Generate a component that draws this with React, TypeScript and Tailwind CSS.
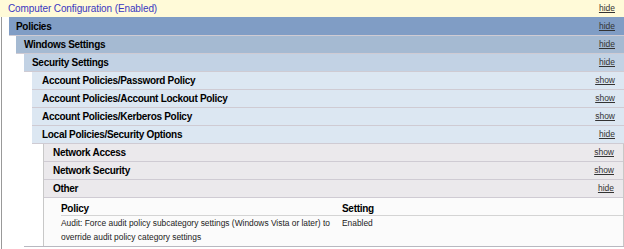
const Link = ({ label }: { label: string }) => (
  <span className="text-[8.5px] text-[#333] underline pr-[9px]">{label}</span>
);

const Row = ({
  title,
  link,
  className,
}: {
  title: string;
  link: string;
  className: string;
}) => (
  <div
    className={`flex items-center justify-between h-[18px] border-b border-[#cfcbd3] ${className}`}
  >
    <span className="text-[10px] font-bold tracking-[-0.3px] text-black">{title}</span>
    <Link label={link} />
  </div>
);

export default function App() {
  return (
    <div
      className="w-[624px] h-[249px] bg-white overflow-hidden"
      style={{ fontFamily: '"Liberation Sans", Arial, sans-serif' }}
    >
      <div className="flex items-center justify-between h-[17px] bg-[#fffad8] pl-[8px]">
        <span className="text-[10px] text-[#3a38c0] tracking-[-0.1px]">
          Computer Configuration (Enabled)
        </span>
        <Link label="hide" />
      </div>

      <div className="ml-[1px] border-l border-[#999] pl-[7px] h-[232px]">
        <Row title="Policies" link="hide" className="bg-[#809dc5] h-[19px] pl-[7px]" />
        <div className="pl-[7px]">
          <Row title="Windows Settings" link="hide" className="bg-[#a5bad2] pl-[8px]" />
          <div className="pl-[8px]">
            <Row title="Security Settings" link="hide" className="bg-[#c2d2e4] pl-[8px]" />
            <div className="pl-[8px] border-b border-[#b8b8c0]">
              <Row
                title="Account Policies/Password Policy"
                link="show"
                className="bg-[#dce7f2] pl-[10px]"
              />
              <Row
                title="Account Policies/Account Lockout Policy"
                link="show"
                className="bg-[#dce7f2] pl-[10px]"
              />
              <Row
                title="Account Policies/Kerberos Policy"
                link="show"
                className="bg-[#dce7f2] pl-[10px]"
              />
              <Row
                title="Local Policies/Security Options"
                link="hide"
                className="bg-[#dce7f2] pl-[10px]"
              />
              <div className="ml-[11px] border-l border-[#c8c8c8] border-r">
                <Row title="Network Access" link="show" className="bg-[#ebe9ec] pl-[9px]" />
                <Row title="Network Security" link="show" className="bg-[#ebe9ec] pl-[9px]" />
                <Row title="Other" link="hide" className="bg-[#ebe9ec] pl-[9px]" />
                <div className="bg-[#fbfbfb] pl-[17px] pt-[4px] h-[48px]">
                  <div className="flex items-center h-[14px] border-b border-[#d4d4d4]">
                    <span className="w-[281px] text-[10px] font-bold tracking-[-0.3px] text-black">
                      Policy
                    </span>
                    <span className="text-[10px] font-bold tracking-[-0.3px] text-black">
                      Setting
                    </span>
                  </div>
                  <div className="flex text-[8.4px] leading-[14px] text-[#222]">
                    <span className="w-[281px]">
                      Audit: Force audit policy subcategory settings (Windows Vista or later) to
                      <br />
                      override audit policy category settings
                    </span>
                    <span>Enabled</span>
                  </div>
                </div>
              </div>
            </div>
          </div>
        </div>
      </div>
    </div>
  );
}
